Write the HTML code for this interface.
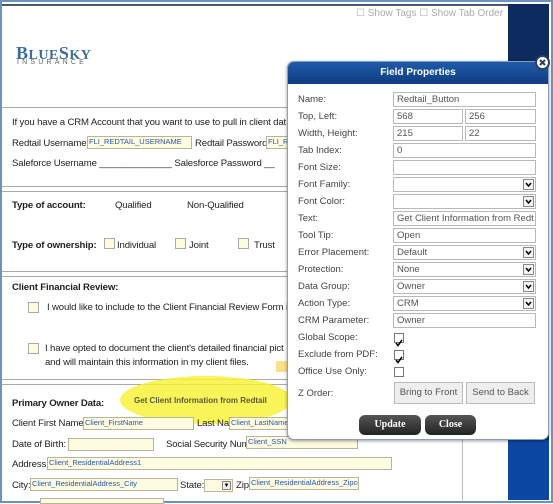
<!DOCTYPE html>
<html><head><style>
*{margin:0;padding:0;box-sizing:border-box}
body{width:553px;height:503px;overflow:hidden;background:#fff;font-family:"Liberation Sans",sans-serif;position:relative}
.a{position:absolute;white-space:nowrap}
.t{font-size:9.6px;color:#222;letter-spacing:-0.15px}
.b{font-weight:bold}
.hl{position:absolute;height:1px;background:#a9a9a9}
.fb{position:absolute;background:#fdfbe0;border:1px solid #b8b39a;font-size:7.5px;color:#2a55b0;line-height:9px;padding-left:1px;overflow:hidden;white-space:nowrap}
.cb{position:absolute;width:11px;height:11px;background:#fdfbe0;border:1px solid #aaa}
.pl{position:absolute;left:10px;font-size:9.5px;color:#444;font-family:"Liberation Sans",sans-serif}
.pi{position:absolute;height:15px;border:1px solid #b9b9b9;background:#fff;font-size:9.5px;color:#555;font-family:"Liberation Sans",sans-serif;line-height:13px;padding-left:3px;overflow:hidden;white-space:nowrap}
.dd{position:absolute;right:1px;top:1px;width:11px;height:11px;border:1px solid #888;background:#f4f4f4}
.dd svg{display:block}
.ck{position:absolute;left:106px;width:10px;height:10px;border:1px solid #777;background:#fff}
.btn{position:absolute;height:20px;border-radius:6px;background:linear-gradient(#555,#222);color:#fff;font:bold 10px "Liberation Serif",serif;text-align:center;line-height:20px}
.gb{position:absolute;height:22px;border:1px solid #bbb;background:#eee;font-size:9.5px;color:#555;text-align:center;line-height:20px}
</style></head><body>
<div class="a" style="left:0;top:0;width:553px;height:503px;border:2px solid #6b93bb"></div>
<div class="a" style="left:2px;top:4px;width:506px;height:2px;background:#4a5a6e"></div>
<div class="a" style="left:508px;top:4px;width:41px;height:496px;background:#0c2b5e"></div>
<div class="a" style="left:508px;top:440px;width:41px;height:60px;background:#0b47a3"></div>
<div class="a" style="left:462px;top:438px;width:1px;height:62px;background:#bbb"></div>
<div class="a" style="left:356px;top:8px;font-size:10px;color:#aaa">☐ Show Tags ☐ Show Tab Order</div>

<div class="a" style="left:16px;top:43px;font:bold 18px 'Liberation Serif',serif;color:#3e6d9c;letter-spacing:0.5px">B<span style="font-size:14px">LUE</span>S<span style="font-size:14px">KY</span></div>
<div class="a" style="left:17px;top:59px;font-size:7px;color:#666;letter-spacing:3.2px">INSURANCE</div>

<div class="hl" style="left:2px;top:107px;width:288px"></div>
<div class="a t" style="left:12px;top:117px">If you have a CRM Account that you want to use to pull in client dat</div>
<div class="a t" style="left:12px;top:138px">Redtail Username</div>
<div class="fb" style="left:87px;top:136px;width:105px;height:13px">FLI_REDTAIL_USERNAME</div>
<div class="a t" style="left:195px;top:138px">Redtail Password</div>
<div class="fb" style="left:266px;top:136px;width:24px;height:13px">FLI_R</div>
<div class="a t" style="left:12px;top:158px">Saleforce Username ______________ Salesforce Password __</div>
<div class="hl" style="left:2px;top:186px;width:288px"></div>
<div class="hl" style="left:2px;top:191px;width:288px"></div>
<div class="a t b" style="left:12px;top:200px">Type of account:</div>
<div class="a t" style="left:115px;top:200px">Qualified</div>
<div class="a t" style="left:187px;top:200px">Non-Qualified</div>
<div class="a t b" style="left:12px;top:240px">Type of ownership:</div>
<div class="cb" style="left:104px;top:238px"></div><div class="a t" style="left:117px;top:240px">Individual</div>
<div class="cb" style="left:175px;top:238px"></div><div class="a t" style="left:189px;top:240px">Joint</div>
<div class="cb" style="left:238px;top:238px"></div><div class="a t" style="left:254px;top:240px">Trust</div>
<div class="hl" style="left:2px;top:271px;width:288px"></div>
<div class="hl" style="left:2px;top:276px;width:288px"></div>
<div class="a t b" style="left:12px;top:282px">Client Financial Review:</div>
<div class="cb" style="left:28px;top:302px"></div><div class="a t" style="left:47px;top:302px">I would like to include to the Client Financial Review Form i</div>
<div class="cb" style="left:28px;top:343px"></div><div class="a t" style="left:45px;top:343px">I have opted to document the client's detailed financial pict</div>
<div class="a t" style="left:45px;top:357px">and will maintain this information in my client files.</div>
<div class="a" style="left:276px;top:361px;width:14px;height:11px;background:#fbe08a"></div>
<div class="hl" style="left:2px;top:379px;width:288px"></div>
<div class="hl" style="left:2px;top:384px;width:460px"></div>
<div class="a" style="left:120px;top:376px;width:172px;height:48px;border-radius:50%;background:#f8f23a;opacity:.85"></div>
<div class="a" style="left:134px;top:396px;font-size:8px;font-weight:bold;color:#5a5a40">Get Client Information from Redtail</div>
<div class="a t b" style="left:12px;top:398px">Primary Owner Data:</div>
<div class="a t" style="left:12px;top:418px">Client First Name</div>
<div class="fb" style="left:83px;top:417px;width:111px;height:13px">Client_FirstName</div>
<div class="a t" style="left:197px;top:418px">Last Name</div>
<div class="fb" style="left:229px;top:417px;width:100px;height:13px">Client_LastName</div>
<div class="a t" style="left:12px;top:439px">Date of Birth:</div>
<div class="fb" style="left:68px;top:438px;width:86px;height:13px"></div>
<div class="a t" style="left:166px;top:439px">Social Security Number</div>
<div class="fb" style="left:246px;top:436px;width:112px;height:13px">Client_SSN</div>
<div class="a t" style="left:12px;top:459px">Address:</div>
<div class="fb" style="left:47px;top:457px;width:345px;height:13px">Client_ResidentialAddress1</div>
<div class="a t" style="left:12px;top:480px">City:</div>
<div class="fb" style="left:30px;top:478px;width:148px;height:13px">Client_ResidentialAddress_City</div>
<div class="a t" style="left:180px;top:480px">State:</div>
<div class="fb" style="left:204px;top:479px;width:29px;height:13px"><div style="position:absolute;right:1px;top:1px;width:9px;height:9px;border:1px solid #888;background:#eee;font-size:6px;line-height:8px;text-align:center;color:#000">▼</div></div>
<div class="a t" style="left:236px;top:480px">Zip:</div>
<div class="fb" style="left:249px;top:477px;width:110px;height:13px">Client_ResidentialAddress_Zipcod</div>
<div class="fb" style="left:40px;top:498px;width:124px;height:6px"></div>

<div class="a" style="left:287px;top:61px;width:262px;height:379px;background:#fff;border:1px solid #8aa0bb;border-radius:7px;box-shadow:0 1px 3px rgba(0,0,0,.4);overflow:hidden">
 <div style="height:22px;background:linear-gradient(#1f5aa8,#0e3d82);color:#fff;font-weight:bold;font-size:10px;text-align:center;line-height:22px">Field Properties</div>
 <div class="pl" style="top:32px">Name:</div><div class="pi" style="left:105px;top:30px;width:143px">Redtail_Button</div>
 <div class="pl" style="top:49px">Top, Left:</div><div class="pi" style="left:105px;top:47px;width:70px">568</div><div class="pi" style="left:177px;top:47px;width:71px">256</div>
 <div class="pl" style="top:66px">Width, Height:</div><div class="pi" style="left:105px;top:64px;width:70px">215</div><div class="pi" style="left:177px;top:64px;width:71px">22</div>
 <div class="pl" style="top:83px">Tab Index:</div><div class="pi" style="left:105px;top:81px;width:143px">0</div>
 <div class="pl" style="top:100px">Font Size:</div><div class="pi" style="left:105px;top:98px;width:143px"></div>
 <div class="pl" style="top:117px">Font Family:</div><div class="pi" style="left:105px;top:115px;width:143px"><div class="dd"><svg width="9" height="9"><path d="M2 3L4.5 6L7 3" stroke="#000" stroke-width="1.5" fill="none"/></svg></div></div>
 <div class="pl" style="top:134px">Font Color:</div><div class="pi" style="left:105px;top:132px;width:143px"><div class="dd"><svg width="9" height="9"><path d="M2 3L4.5 6L7 3" stroke="#000" stroke-width="1.5" fill="none"/></svg></div></div>
 <div class="pl" style="top:151px">Text:</div><div class="pi" style="left:105px;top:149px;width:143px">Get Client Information from Redt</div>
 <div class="pl" style="top:168px">Tool Tip:</div><div class="pi" style="left:105px;top:166px;width:143px">Open</div>
 <div class="pl" style="top:185px">Error Placement:</div><div class="pi" style="left:105px;top:183px;width:143px">Default<div class="dd"><svg width="9" height="9"><path d="M2 3L4.5 6L7 3" stroke="#000" stroke-width="1.5" fill="none"/></svg></div></div>
 <div class="pl" style="top:202px">Protection:</div><div class="pi" style="left:105px;top:200px;width:143px">None<div class="dd"><svg width="9" height="9"><path d="M2 3L4.5 6L7 3" stroke="#000" stroke-width="1.5" fill="none"/></svg></div></div>
 <div class="pl" style="top:219px">Data Group:</div><div class="pi" style="left:105px;top:217px;width:143px">Owner<div class="dd"><svg width="9" height="9"><path d="M2 3L4.5 6L7 3" stroke="#000" stroke-width="1.5" fill="none"/></svg></div></div>
 <div class="pl" style="top:236px">Action Type:</div><div class="pi" style="left:105px;top:234px;width:143px">CRM<div class="dd"><svg width="9" height="9"><path d="M2 3L4.5 6L7 3" stroke="#000" stroke-width="1.5" fill="none"/></svg></div></div>
 <div class="pl" style="top:253px">CRM Parameter:</div><div class="pi" style="left:105px;top:251px;width:143px">Owner</div>
 <div class="pl" style="top:270px">Global Scope:</div><div class="ck" style="top:271px"><svg width="8" height="8"><path d="M1 4L3 6.5L7 1" stroke="#000" stroke-width="1.5" fill="none"/></svg></div>
 <div class="pl" style="top:287px">Exclude from PDF:</div><div class="ck" style="top:288px"><svg width="8" height="8"><path d="M1 4L3 6.5L7 1" stroke="#000" stroke-width="1.5" fill="none"/></svg></div>
 <div class="pl" style="top:304px">Office Use Only:</div><div class="ck" style="top:305px"></div>
 <div class="pl" style="top:326px">Z Order:</div>
 <div class="gb" style="left:106px;top:320px;width:69px">Bring to Front</div>
 <div class="gb" style="left:178px;top:320px;width:69px">Send to Back</div>
 <div class="btn" style="left:71px;top:353px;width:62px">Update</div>
 <div class="btn" style="left:137px;top:353px;width:51px">Close</div>
</div>
<div class="a" style="left:535px;top:55px;width:15px;height:15px;border-radius:50%;background:#fff;border:2px solid #2a3f5c"><svg width="11" height="11" style="display:block"><path d="M3 3L8 8M8 3L3 8" stroke="#2a3f5c" stroke-width="2"/></svg></div>
</body></html>
